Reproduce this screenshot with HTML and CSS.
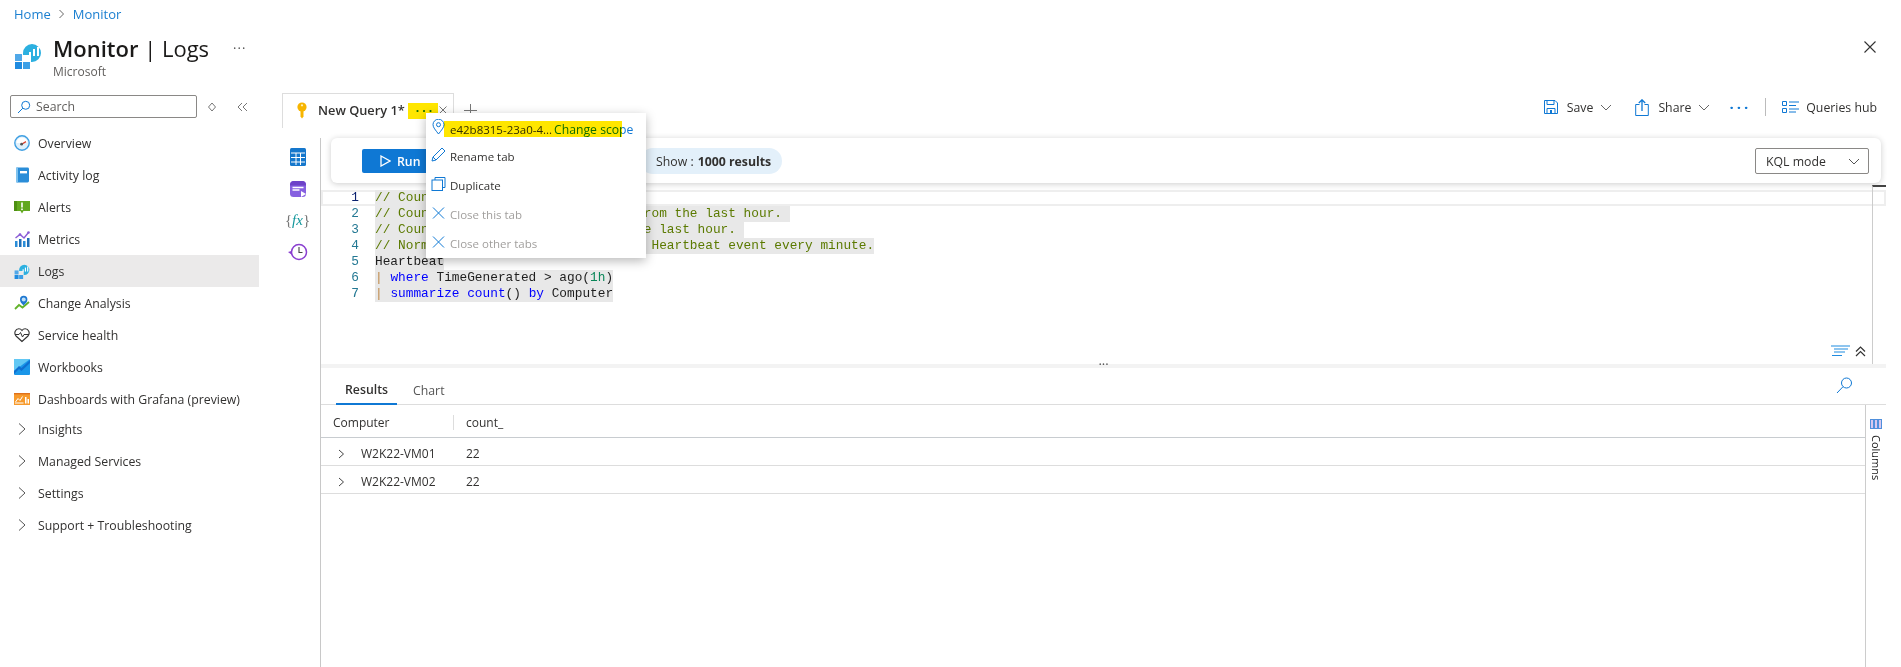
FILE: index.html
```html
<!DOCTYPE html>
<html lang="en">
<head>
<meta charset="utf-8">
<title>Monitor | Logs</title>
<link rel="stylesheet" href="styles.css">
</head>
<body>
<nav class="crumbs"><a>Home</a><svg class="crumb-sep" width="8" height="10" viewBox="0 0 8 10"><path d="M1.5 1l4 4-4 4" fill="none" stroke="#666" stroke-width="1"/></svg><a>Monitor</a></nav>
<header class="head">
  <svg class="logo" width="28" height="28" viewBox="0 0 28 28"><rect x="1" y="13" width="7" height="7" fill="#50a8e8"/><rect x="1" y="21" width="7" height="7" fill="#1f8be0"/><rect x="9" y="21" width="7" height="7" fill="#3b9fe6"/><path d="M9 12a9 9 0 1 1 9 9h-1v-7H9z" fill="#2cb0e0"/><rect x="15" y="11" width="2" height="4" fill="#fff"/><rect x="19" y="8" width="2" height="7" fill="#fff"/><rect x="23" y="6" width="2" height="9" fill="#fff"/></svg>
  <div class="titles">
    <h1 class="title"><b>Monitor</b> | Logs</h1>
    <div class="subtitle">Microsoft</div>
  </div>
  <span class="head-more">···</span>
  <svg class="close" width="14" height="14" viewBox="0 0 14 14"><path d="M1.5 1.5l11 11M12.5 1.5l-11 11" stroke="#333" stroke-width="1.1"/></svg>
</header>
<div class="layout">
  <aside class="side">
    <div class="search-row">
      <div class="search">
        <svg width="14" height="14" viewBox="0 0 14 14"><circle cx="8.7" cy="5.3" r="4" fill="none" stroke="#0f78d4"/><path d="M5.8 8.2L1 13" stroke="#0f78d4"/></svg>
        <span>Search</span>
      </div>
      <svg class="updown" width="10" height="10" viewBox="0 0 10 10"><path d="M5 1l3.500 4L5 9 1.500 5z" fill="none" stroke="#777"/></svg>
      <svg class="collapse" width="11" height="10" viewBox="0 0 11 10"><path d="M5 1L1 5l4 4M10 1L6 5l4 4" fill="none" stroke="#777"/></svg>
    </div>
    <ul class="nav">
      <li class="item"><svg width="16" height="16" viewBox="0 0 16 16"><circle cx="8" cy="8" r="7.2" fill="#dff0fb" stroke="#3f9fe2" stroke-width="1.4"/><path d="M2.5 8a5.5 5.5 0 0 1 11 0z" fill="#fff"/><path d="M8 9l4-2.4" stroke="#d8402f" stroke-width="1.4"/><circle cx="7.6" cy="9.2" r="1.4" fill="#555"/></svg>Overview</li>
      <li class="item"><svg width="16" height="16" viewBox="0 0 16 16"><rect x="2" y="0.5" width="13" height="15" rx="1.4" fill="#2a8dd8"/><rect x="2" y="0.5" width="2" height="15" fill="#7fc2ee"/><rect x="6" y="4" width="7" height="2.4" fill="#fff"/></svg>Activity log</li>
      <li class="item"><svg width="16" height="16" viewBox="0 0 16 16"><path d="M0 2h16v10H9.5L8 14.5 6.500 12H0z" fill="#62a81f"/><path d="M0 2h3v10H0z" fill="#4d8f12"/><rect x="7.200" y="3.500" width="1.600" height="5" fill="#fff"/><rect x="7.200" y="9.500" width="1.600" height="1.600" fill="#fff"/></svg>Alerts</li>
      <li class="item"><svg width="16" height="16" viewBox="0 0 16 16"><rect x="1" y="10" width="2.500" height="6" fill="#2a8dd8"/><rect x="5" y="8" width="2.500" height="8" fill="#1f6fb8"/><rect x="9" y="10" width="2.500" height="6" fill="#2a8dd8"/><rect x="13" y="7" width="2.500" height="9" fill="#1f6fb8"/><path d="M1.500 7L6 3.500l4 3.500L14.500 1.500" fill="none" stroke="#8a5cd6" stroke-width="1.400"/><circle cx="6" cy="3.500" r="1.300" fill="#8a5cd6"/><circle cx="14.500" cy="1.500" r="1.300" fill="#8a5cd6"/></svg>Metrics</li>
      <li class="item active"><svg width="16" height="16" viewBox="0 0 28 28"><rect x="1" y="13" width="7" height="7" fill="#50a8e8"/><rect x="1" y="21" width="7" height="7" fill="#1f8be0"/><rect x="9" y="21" width="7" height="7" fill="#3b9fe6"/><path d="M9 12a9 9 0 1 1 9 9h-1v-7H9z" fill="#2cb0e0"/><rect x="15" y="11" width="2" height="4" fill="#fff"/><rect x="19" y="8" width="2" height="7" fill="#fff"/><rect x="23" y="6" width="2" height="9" fill="#fff"/></svg>Logs</li>
      <li class="item"><svg width="16" height="16" viewBox="0 0 16 16"><path d="M1 14l4-4 3.500 2.500L15 7" fill="none" stroke="#62b32a" stroke-width="1.800"/><path d="M9.500 10.500C7.500 8.500 6 7 6 4.500a3.700 3.700 0 0 1 7.400 0c0 2.500-1.900 4-3.900 6z" fill="#1f78d1"/><circle cx="9.700" cy="4.500" r="2" fill="#bfe0f7"/></svg>Change Analysis</li>
      <li class="item"><svg width="16" height="16" viewBox="0 0 16 16"><path d="M8 14.500L2 9C-.5 6 1.500 1.800 4.800 1.800 6.300 1.800 7.400 2.600 8 3.500c.6-.9 1.700-1.700 3.200-1.700C14.500 1.800 16.500 6 14 9z" fill="none" stroke="#333" stroke-width="1.100"/><path d="M1 7.500h4l1.500-2 2 4.500 1.500-2.500h5" fill="none" stroke="#333" stroke-width="1"/></svg>Service health</li>
      <li class="item"><svg width="16" height="16" viewBox="0 0 16 16"><rect width="16" height="16" rx="1" fill="#1a96e8"/><path d="M0 0h16L0 12z" fill="#62c8f4"/><path d="M0 12l5-5 2.500 2L16 1v3L7.500 12 5 10l-5 5z" fill="#0f6fd0"/></svg>Workbooks</li>
      <li class="item"><svg width="16" height="16" viewBox="0 0 16 16"><rect y="2" width="16" height="12" fill="#f79a2c"/><rect y="2" width="16" height="1.400" fill="#e0701a"/><path d="M1.500 11l2.500-3.500 2 2 2.500-4" fill="none" stroke="#fff"/><rect x="1" y="11.500" width="8.500" height="1" fill="#fff"/><rect x="11" y="6" width="1.500" height="6.500" fill="#fff"/><rect x="13.500" y="8" width="1.500" height="4.500" fill="#fff"/></svg>Dashboards with Grafana (preview)</li>
    </ul>
    <ul class="nav group">
      <li class="item"><svg class="chev" width="16" height="16" viewBox="0 0 16 16"><path d="M5 2.500L11 8l-6 5.500" fill="none" stroke="#555" stroke-width="1"/></svg>Insights</li>
      <li class="item"><svg class="chev" width="16" height="16" viewBox="0 0 16 16"><path d="M5 2.500L11 8l-6 5.500" fill="none" stroke="#555" stroke-width="1"/></svg>Managed Services</li>
      <li class="item"><svg class="chev" width="16" height="16" viewBox="0 0 16 16"><path d="M5 2.500L11 8l-6 5.500" fill="none" stroke="#555" stroke-width="1"/></svg>Settings</li>
      <li class="item"><svg class="chev" width="16" height="16" viewBox="0 0 16 16"><path d="M5 2.500L11 8l-6 5.500" fill="none" stroke="#555" stroke-width="1"/></svg>Support + Troubleshooting</li>
    </ul>
  </aside>
  <main class="main">
    <div class="tabbar">
      <div class="tab">
        <svg class="tab-key" width="12" height="17" viewBox="0 0 12 17"><circle cx="6" cy="5" r="4.600" fill="#f7b500"/><path d="M4.500 8h3v6.500L6 16.500l-1.500-2z" fill="#f7b500"/><circle cx="6" cy="3.300" r="1.100" fill="#fff3c0"/></svg>
        <span class="tab-name">New Query 1*</span>
        <span class="tab-dots">···</span>
        <svg class="tab-x" width="8" height="8" viewBox="0 0 8 8"><path d="M.5.500l7 7M7.500.500l-7 7" stroke="#777"/></svg>
      </div>
      <svg class="tab-add" width="13" height="13" viewBox="0 0 13 13"><path d="M6.500 0v13M0 6.500h13" stroke="#777"/></svg>
      <div class="actions">
        <button class="act"><svg width="14" height="14" viewBox="0 0 14 14"><path d="M.5.500h10.500l2.500 2.500v10.500H.500z" fill="none" stroke="#0f78d4"/><path d="M3 .500v4h7v-4M3 13.500V8.500h8v5" fill="none" stroke="#0f78d4"/><rect x="6" y="10" width="2" height="3.500" fill="#0f78d4"/></svg>Save<svg class="caret" width="12" height="7" viewBox="0 0 12 7"><path d="M1 1l5 5 5-5" fill="none" stroke="#666"/></svg></button>
        <button class="act share"><svg width="14" height="17" viewBox="0 0 14 17"><path d="M4.500 5.500H.700v11h12.600v-11H9.500" fill="none" stroke="#0f78d4"/><path d="M7 12V1M3.800 4L7 .800 10.200 4" fill="none" stroke="#0f78d4" stroke-width="1.300"/></svg>Share<svg class="caret" width="12" height="7" viewBox="0 0 12 7"><path d="M1 1l5 5 5-5" fill="none" stroke="#666"/></svg></button>
        <span class="act-more">···</span>
        <i class="act-div"></i>
        <button class="act hub"><svg width="17" height="12" viewBox="0 0 17 12"><path d="M.500.500h4v4h-4zM.500 7.500h4v4h-4z" fill="none" stroke="#0f78d4"/><path d="M7 1h10M7 4.500h7M7 8h10M7 11h7" stroke="#0f78d4"/></svg>Queries hub</button>
      </div>
    </div>
    <div class="work">
      <div class="rail">
        <svg width="16" height="18" viewBox="0 0 16 18"><rect width="16" height="18" rx="1.500" fill="#1577cc"/><path d="M1 5h14M1 9.500h14M1 14h14M6 5v12M10.500 5v12" stroke="#fff" stroke-width="1"/></svg>
        <svg width="18" height="18" viewBox="0 0 18 18"><rect x="1" y="1" width="16" height="16" rx="3.500" fill="#8660e0"/><path d="M1 5.500a4 4 0 0 1 4-4.500h8a4 4 0 0 1 4 4.500z" fill="#6d42c8"/><path d="M3.500 7.500h11M3.500 10h7" stroke="#fff" stroke-width="1.300"/><path d="M12 11l5 3-5 3z" fill="#fff"/></svg>
        <span class="fx"><i>{</i><em>fx</em><i>}</i></span>
        <svg width="20" height="18" viewBox="0 0 20 18"><circle cx="11" cy="9" r="7.500" fill="#fff" stroke="#8a3fd0" stroke-width="1.500"/><path d="M11 4v5.500h3.500" fill="none" stroke="#444" stroke-width="1.100"/><path d="M0 9l3.500-1 .5 4z" fill="#8a3fd0"/></svg>
      </div>
      <div class="content">
        <div class="cmdbar">
          <button class="run"><svg width="11" height="12" viewBox="0 0 11 12"><path d="M1 1l9 5-9 5z" fill="none" stroke="#fff" stroke-width="1.300"/></svg>Run</button>
          <div class="pill">Show : <b>1000 results</b></div>
          <div class="mode">KQL mode<svg width="12" height="7" viewBox="0 0 12 7"><path d="M1 1l5 5 5-5" fill="none" stroke="#555"/></svg></div>
        </div>
        <section class="editor">
          <div class="curline"></div>
          <div class="scrollmark"></div>
          <div class="code">
            <div class="ln"><span class="no act-no">1</span><span class="sel"><span class="cm">// Count heartbeats</span></span></div>
            <div class="ln"><span class="no">2</span><span class="sel"><span class="cm">// Count heartbeats per computers from the last hour. </span></span></div>
            <div class="ln"><span class="no">3</span><span class="sel"><span class="cm">// Count of heartbeats seen over the last hour. </span></span></div>
            <div class="ln"><span class="no">4</span><span class="sel"><span class="cm">// Normally, each machine sends one Heartbeat event every minute.</span></span></div>
            <div class="ln"><span class="no">5</span><span class="sel">Heartbeat</span></div>
            <div class="ln"><span class="no">6</span><span class="sel"><span class="pp">|</span> <span class="kw">where</span> TimeGenerated &gt; ago(<span class="num">1h</span>)</span></div>
            <div class="ln"><span class="no">7</span><span class="sel"><span class="pp">|</span> <span class="kw">summarize</span> <span class="kw">count</span>() <span class="kw2">by</span> Computer</span></div>
          </div>
          <div class="editor-tools">
            <svg width="19" height="12" viewBox="0 0 19 12"><path d="M0 1h19M3 4h14M3 7h11M1 10.500h10" stroke="#1f8be0" stroke-width="1.200"/></svg>
            <svg width="11" height="11" viewBox="0 0 11 11"><path d="M1 5.500l4.500-4.500 4.500 4.500M1 10l4.500-4.500L10 10" fill="none" stroke="#333" stroke-width="1.200"/></svg>
          </div>
        </section>
        <div class="split"><span>···</span></div>
        <section class="results">
          <div class="rtabs">
            <span class="rtab on">Results</span>
            <span class="rtab">Chart</span>
            <svg class="rsearch" width="17" height="17" viewBox="0 0 17 17"><circle cx="10.500" cy="6" r="5" fill="none" stroke="#0f78d4"/><path d="M7 9.700L1 16" stroke="#0f78d4"/></svg>
          </div>
          <div class="gridwrap">
            <div class="grid">
              <div class="ghead"><span class="c1">Computer</span><span class="c2">count_</span></div>
              <div class="grow"><svg width="7" height="10" viewBox="0 0 7 10"><path d="M1 1l4.500 4L1 9" fill="none" stroke="#444"/></svg><span class="c1b">W2K22-VM01</span><span>22</span></div>
              <div class="grow"><svg width="7" height="10" viewBox="0 0 7 10"><path d="M1 1l4.500 4L1 9" fill="none" stroke="#444"/></svg><span class="c1b">W2K22-VM02</span><span>22</span></div>
            </div>
            <div class="colpanel">
              <svg width="12" height="10" viewBox="0 0 12 10"><rect x=".500" y=".500" width="3" height="9" fill="#d6c8f0" stroke="#4f8fdc"/><rect x="4.500" y=".500" width="3" height="9" fill="#d6c8f0" stroke="#4f8fdc"/><rect x="8.500" y=".500" width="3" height="9" fill="#d6c8f0" stroke="#4f8fdc"/></svg>
              <span class="coltext">Columns</span>
            </div>
          </div>
        </section>
      </div>
    </div>
    <div class="mark mark-dots"></div>
    <div class="menu">
      <div class="mi first"><svg width="14" height="16" viewBox="0 0 14 16"><path d="M7 15C4 11 1.500 8.500 1.500 5.700a5.500 5.500 0 0 1 11 0C12.500 8.500 10 11 7 15z" fill="none" stroke="#0f78d4"/><circle cx="7" cy="5.700" r="2" fill="none" stroke="#0f78d4"/></svg><span>e42b8315-23a0-4...</span><a>Change scope</a></div>
      <div class="mi"><svg width="15" height="15" viewBox="0 0 15 15"><path d="M1 14l1-4L11 1l3 3-9 9zM2 10l3 3" fill="none" stroke="#0f78d4"/></svg><span>Rename tab</span></div>
      <div class="mi"><svg width="14" height="14" viewBox="0 0 14 14"><path d="M3.500 3V.500h10v10H11" fill="none" stroke="#0f78d4"/><rect x=".500" y="3" width="10.500" height="10.500" fill="none" stroke="#0f78d4"/></svg><span>Duplicate</span></div>
      <div class="mi off"><svg width="12" height="12" viewBox="0 0 12 12"><path d="M.500.500l11 11M11.500.500l-11 11" stroke="#0f78d4"/></svg><span>Close this tab</span></div>
      <div class="mi off"><svg width="12" height="12" viewBox="0 0 12 12"><path d="M.500.500l11 11M11.500.500l-11 11" stroke="#0f78d4"/></svg><span>Close other tabs</span></div>
      <div class="mark mark-scope"></div>
    </div>
  </main>
</div>
</body>
</html>
```
FILE: styles.css
```css
* { box-sizing: border-box; }
html, body { margin: 0; height: 667px; overflow: hidden; background: #fff; }
body { font-family: "Open Sans", "Noto Sans", sans-serif; font-size: 12.3px; color: #323130; }
ul { list-style: none; margin: 0; padding: 0; }
button { font: inherit; color: inherit; background: none; border: 0; padding: 0; }

.crumbs { height: 28px; display: flex; align-items: center; gap: 7px; padding-left: 14px; font-size: 13px; color: #1a7fd0; }
.head { height: 65px; display: flex; padding: 0 24px 0 14px; position: relative; }
.logo { margin: 13px 11px 0 0; }
.title { margin: 4px 0 0; font-size: 22px; line-height: 32px; font-weight: 400; color: #1b1a19; white-space: nowrap; }
.title b { font-weight: 600; }
.subtitle { font-size: 12px; line-height: 14px; margin-top: 1px; color: #605e5c; }
.head-more { margin: 10px 0 0 24px; font-size: 13px; color: #555; line-height: 20px; letter-spacing: 1px; }
.close { margin: 12px 0 0 auto; }

.layout { display: flex; height: 574px; }
.side { width: 259px; flex: none; }
.search-row { display: flex; align-items: center; height: 34px; padding: 2px 0 9px 10px; }
.search { width: 187px; height: 23px; border: 1px solid #8a8886; border-radius: 2px; display: flex; align-items: center; gap: 5px; padding-left: 6px; color: #605e5c; }
.updown { margin-left: 10px; }
.collapse { margin-left: 20px; }
.item { height: 32px; display: flex; align-items: center; gap: 8px; padding-left: 14px; white-space: nowrap; }
.item.active { background: #ebeaea; }
.group { margin-top: -2px; }

.main { flex: 1; min-width: 0; position: relative; padding-left: 23px; display: flex; flex-direction: column; }
.tabbar { height: 35px; display: flex; align-items: center; flex: none; }
.tab { width: 172px; height: 35px; border: 1px solid #ddd; border-bottom: 0; display: flex; align-items: center; padding: 0 0 2px 13px; font-weight: 600; white-space: nowrap; }
.tab-key { flex: none; }
.tab-name { margin-left: 10px; font-size: 12.8px; }
.tab-dots { margin-left: 11px; color: #107c10; font-weight: 700; letter-spacing: 3px; width: 21px; }
.tab-x { margin-left: 2px; flex: none; }
.tab-add { margin-left: 10px; }
.actions { margin-left: auto; display: flex; align-items: center; padding-right: 24px; height: 26px; margin-top: -7px; }
.act { display: flex; align-items: center; gap: 9px; color: #323130; white-space: nowrap; }
.act .caret { margin-left: -2px; }
.share { margin-left: 23px; }
.act-more { margin-left: 19px; color: #0f78d4; font-size: 15px; font-weight: 700; letter-spacing: 3px; }
.act-div { width: 1px; height: 18px; background: #bbb; margin: 0 16px 0 14px; }
.hub { gap: 7px; }

.work { flex: 1; display: flex; min-height: 0; }
.rail { width: 39px; margin-top: 10px; border-right: 1px solid #c8c8c8; display: flex; flex-direction: column; align-items: center; gap: 13.5px; padding: 10px 7px 0 0; flex: none; }
.fx { font-family: "Liberation Serif", serif; font-size: 15px; color: #777; line-height: 18px; white-space: nowrap; }
.fx i { font-style: normal; }
.fx em { color: #13979c; }

.content { flex: 1; min-width: 0; display: flex; flex-direction: column; padding-right: 15px; }
.cmdbar { height: 45px; margin: 10px 5px 0 10px; background: #fff; border-radius: 6px; box-shadow: 0 1px 6px rgba(0,0,0,.2); display: flex; align-items: center; padding: 1px 12px 0 31px; flex: none; position: relative; }
.run { width: 110px; height: 24px; background: #0f78d4; color: #fff; border-radius: 2px; display: flex; align-items: center; gap: 6px; padding-left: 18px; font-weight: 600; }
.pill { margin-left: 168px; width: 142px; height: 26px; border-radius: 13px; background: #e3f0fa; display: flex; align-items: center; gap: 4px; padding-left: 16px; white-space: nowrap; }
.pill b { font-weight: 700; }
.mode { margin-left: auto; width: 114px; height: 26px; border: 1px solid #8a8886; border-radius: 2px; display: flex; align-items: center; justify-content: space-between; padding: 0 8px 0 10px; }

.editor { height: 181px; position: relative; flex: none; }
.curline { position: absolute; top: 7px; left: 0; right: 0; height: 16px; border: 2px solid #eee; }
.scrollmark { position: absolute; top: 2px; right: 0; width: 14px; height: 179px; border-left: 1px solid #ccc; border-top: 2px solid #444; background: none; }
.code { padding-top: 7px; font-family: "Liberation Mono", "DejaVu Sans Mono", monospace; font-size: 12.8px; line-height: 16px; color: #1e1e1e; position: relative; }
.ln { display: flex; height: 16px; white-space: pre; }
.no { width: 38px; text-align: right; margin-right: 16px; color: #237893; }
.act-no { color: #0b216f; }
.sel { background: #e8e8e8; }
.cm { color: #5b7a00; }
.kw { color: #0000ff; }
.kw2 { color: #0000ff; }
.pp { color: #c08a4a; }
.num { color: #098658; }
.editor-tools { position: absolute; right: 20px; bottom: 7px; display: flex; align-items: center; gap: 5px; }

.split { height: 4px; background: #f3f3f3; text-align: center; line-height: 0; color: #555; font-size: 13px; flex: none; }
.results { flex: 1; display: flex; flex-direction: column; min-height: 0; }
.rtabs { height: 37px; display: flex; align-items: flex-end; padding-left: 15px; border-bottom: 1px solid #ddd; position: relative; flex: none; }
.rtab { padding: 0 8px 5px; height: 30px; margin-right: 8px; display: flex; align-items: flex-end; color: #555; }
.rtab.on { color: #323130; font-weight: 600; border-bottom: 2px solid #0f78d4; margin-bottom: -1px; width: 61px; justify-content: center; }
.rsearch { margin-left: auto; margin-right: 33px; margin-bottom: 10px; }
.gridwrap { flex: 1; display: flex; min-height: 0; }
.grid { flex: 1; min-width: 0; }
.ghead { height: 33px; border-bottom: 1px solid #c8ccd0; display: flex; align-items: center; padding: 2px 0 0 12px; font-size: 12px; font-weight: 500; }
.c1 { width: 120px; }
.c2 { border-left: 1px solid #ddd; padding-left: 12px; height: 15px; line-height: 15px; }
.grow { height: 28px; border-bottom: 1px solid #ddd; display: flex; align-items: center; padding: 4px 0 0 17px; font-size: 12px; }
.c1b { margin: 0 0 0 16px; width: 105px; }
.colpanel { width: 21px; border-left: 1px solid #ccc; display: flex; flex-direction: column; align-items: center; padding-top: 14px; gap: 6px; flex: none; }
.coltext { writing-mode: vertical-rl; font-size: 11px; line-height: 14px; color: #222; }

.mark { position: absolute; background: #ffe600; mix-blend-mode: multiply; pointer-events: none; }
.mark-dots { left: 149px; top: 10px; width: 30px; height: 16px; }
.mark-scope { left: 18px; top: 8px; width: 178px; height: 16px; }
.menu { position: absolute; left: 167px; top: 20px; width: 220px; height: 145px; background: #fff; box-shadow: 0 3px 10px rgba(0,0,0,.28); padding-top: 2px; }
.mi { height: 29px; display: flex; align-items: center; padding-left: 5px; font-size: 11.5px; white-space: nowrap; position: relative; }
.mi.first { height: 28px; margin-bottom: -1px; }
.mi svg { flex: none; margin-right: 4px; position: relative; top: -2px; width: 15px; }
.mi a { color: #0f78d4; font-size: 12.2px; margin-left: 2px; }
.mi.off { color: #a19f9d; }
```
